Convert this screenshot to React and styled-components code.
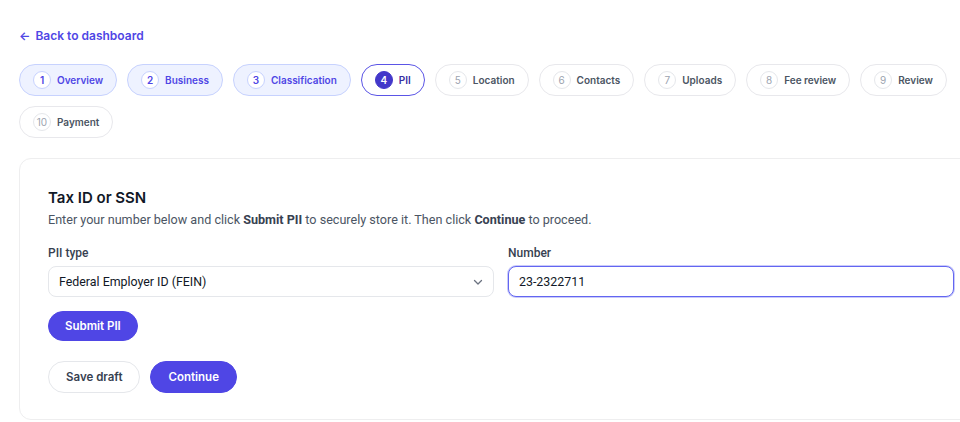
import React, { useEffect, useRef, useState } from 'react';
import styled, { createGlobalStyle, css } from 'styled-components';

const GlobalStyle = createGlobalStyle`
    html, body {
        margin: 0;
        padding: 0;
        background: #ffffff;
        overflow-x: hidden;
    }
    body {
        font-family: Inter, "Noto Sans", sans-serif;
        color: #111827;
    }
    * {
        box-sizing: border-box;
    }
`;

const Page = styled.div`
    padding: 24px 19px 0;
    width: 1002px;
`;

const BackLink = styled.a`
    display: inline-flex;
    align-items: center;
    gap: 5px;
    font-size: 12px;
    font-weight: 600;
    line-height: 18px;
    color: #4f46e5;
    text-decoration: none;
    cursor: pointer;
`;

const Steps = styled.div`
    display: flex;
    flex-wrap: wrap;
    gap: 10px;
    margin-top: 19px;
    width: 964px;
`;

const pillLook = {
    done: css`
        background: #eef2ff;
        border: 1px solid #c7d2fe;
        color: #4f46e5;
    `,
    active: css`
        background: #ffffff;
        border: 1.5px solid #5b55e6;
        color: #3730a3;
    `,
    todo: css`
        background: #ffffff;
        border: 1px solid #e8e8ec;
        color: #4b5563;
    `,
};

const circleLook = {
    done: css`
        background: #ffffff;
        border: 1px solid #c7d2fe;
        color: #4f46e5;
    `,
    active: css`
        background: #4338ca;
        border: 1px solid #4338ca;
        color: #ffffff;
    `,
    todo: css`
        background: #ffffff;
        border: 1px solid #e5e7eb;
        color: #9ca3af;
    `,
};

const Pill = styled.button`
    display: inline-flex;
    align-items: center;
    gap: 6px;
    height: 32px;
    padding: 0 13px;
    border-radius: 999px;
    font-family: Inter, sans-serif;
    font-size: 10px;
    font-weight: 600;
    cursor: pointer;
    ${(p) => pillLook[p.$state]}
`;

const StepNo = styled.span`
    display: inline-flex;
    align-items: center;
    justify-content: center;
    min-width: 18px;
    height: 18px;
    padding: 0 2px;
    border-radius: 999px;
    font-size: 10px;
    font-weight: ${(p) => (p.$state === 'todo' ? 400 : 600)};
    ${(p) => circleLook[p.$state]}
`;

const Card = styled.section`
    margin-top: 20px;
    width: 964px;
    border: 1px solid #eeeeef;
    border-radius: 12px;
    padding: 28px 28px 26px;
    background: #ffffff;
`;

const Title = styled.h2`
    margin: 0;
    font-family: Inter, sans-serif;
    font-size: 15px;
    font-weight: 600;
    line-height: 22px;
    color: #111827;
`;

const Lead = styled.p`
    margin: 2px 0 0;
    font-family: Roboto, "Liberation Sans", sans-serif;
    font-size: 12.6px;
    line-height: 18px;
    color: #4b5563;

    b {
        font-weight: 700;
        color: #374151;
    }
`;

const Fields = styled.div`
    display: grid;
    grid-template-columns: 1fr 1fr;
    gap: 14px;
    margin-top: 16px;
`;

const Field = styled.label`
    display: flex;
    flex-direction: column;
    gap: 5px;
`;

const LabelText = styled.span`
    font-family: Roboto, "Liberation Sans", sans-serif;
    font-size: 12px;
    font-weight: 500;
    line-height: 16px;
    color: #374151;
`;

const SelectWrap = styled.div`
    position: relative;
    display: flex;
`;

const Select = styled.select`
    appearance: none;
    width: 100%;
    height: 31px;
    padding: 0 30px 0 10px;
    border: 1px solid #e5e7eb;
    border-radius: 8px;
    background: #ffffff;
    font-family: Roboto, "Liberation Sans", sans-serif;
    font-size: 12.4px;
    color: #111827;
    outline: none;
`;

const Chevron = styled.svg`
    position: absolute;
    right: 11px;
    top: 50%;
    margin-top: -4px;
    pointer-events: none;
`;

const TextInput = styled.input`
    width: 100%;
    height: 31px;
    padding: 0 10px;
    border: 1.5px solid #6366f1;
    border-radius: 8px;
    box-shadow: 0 0 0 1px rgba(99, 102, 241, 0.35);
    font-family: Roboto, "Liberation Sans", sans-serif;
    font-size: 12.4px;
    color: #111827;
    caret-color: #111827;
    outline: none;
`;

const Button = styled.button`
    display: inline-flex;
    align-items: center;
    justify-content: center;
    height: ${(p) => (p.$small ? '30px' : '32px')};
    padding: 0 ${(p) => (p.$small ? '16px' : '17px')};
    border-radius: 999px;
    font-family: Inter, sans-serif;
    font-size: 11.5px;
    font-weight: 600;
    cursor: pointer;
    ${(p) =>
        p.$primary
            ? css`
                  background: #4f46e5;
                  border: 1px solid #4f46e5;
                  color: #ffffff;
              `
            : css`
                  background: #ffffff;
                  border: 1px solid #e5e7eb;
                  color: #374151;
              `}
`;

const SubmitRow = styled.div`
    display: flex;
    margin-top: 14px;
`;

const Actions = styled.div`
    display: flex;
    gap: 10px;
    margin-top: 20px;
`;

const steps = [
    { no: 1, label: 'Overview', state: 'done' },
    { no: 2, label: 'Business', state: 'done' },
    { no: 3, label: 'Classification', state: 'done' },
    { no: 4, label: 'PII', state: 'active' },
    { no: 5, label: 'Location', state: 'todo' },
    { no: 6, label: 'Contacts', state: 'todo' },
    { no: 7, label: 'Uploads', state: 'todo' },
    { no: 8, label: 'Fee review', state: 'todo' },
    { no: 9, label: 'Review', state: 'todo' },
    { no: 10, label: 'Payment', state: 'todo' },
];

const App = () => {
    const [piiType, setPiiType] = useState('fein');
    const [number, setNumber] = useState('23-2322711');
    const numberRef = useRef();

    useEffect(() => {
        const el = numberRef.current;
        if (el) {
            el.focus();
            el.setSelectionRange(el.value.length, el.value.length);
        }
    }, []);

    return (
        <>
            <GlobalStyle />
            <Page>
                <BackLink>
                    <span>←</span>
                    <span>Back to dashboard</span>
                </BackLink>

                <Steps>
                    {steps.map((s) => (
                        <Pill key={s.no} $state={s.state}>
                            <StepNo $state={s.state}>{s.no}</StepNo>
                            {s.label}
                        </Pill>
                    ))}
                </Steps>

                <Card>
                    <Title>Tax ID or SSN</Title>
                    <Lead>
                        Enter your number below and click <b>Submit PII</b> to securely store it. Then click{' '}
                        <b>Continue</b> to proceed.
                    </Lead>

                    <Fields>
                        <Field>
                            <LabelText>PII type</LabelText>
                            <SelectWrap>
                                <Select value={piiType} onChange={(e) => setPiiType(e.target.value)}>
                                    <option value="fein">Federal Employer ID (FEIN)</option>
                                    <option value="ssn">Social Security Number (SSN)</option>
                                </Select>
                                <Chevron width="10" height="8" viewBox="0 0 10 8">
                                    <path d="M1.5 2.5 L5 6 L8.5 2.5" fill="none" stroke="#6b7280" strokeWidth="1.3" strokeLinecap="round" strokeLinejoin="round" />
                                </Chevron>
                            </SelectWrap>
                        </Field>
                        <Field>
                            <LabelText>Number</LabelText>
                            <TextInput ref={numberRef} value={number} onChange={(e) => setNumber(e.target.value)} />
                        </Field>
                    </Fields>

                    <SubmitRow>
                        <Button $primary $small>Submit PII</Button>
                    </SubmitRow>

                    <Actions>
                        <Button>Save draft</Button>
                        <Button $primary>Continue</Button>
                    </Actions>
                </Card>
            </Page>
        </>
    );
};

export default App;
